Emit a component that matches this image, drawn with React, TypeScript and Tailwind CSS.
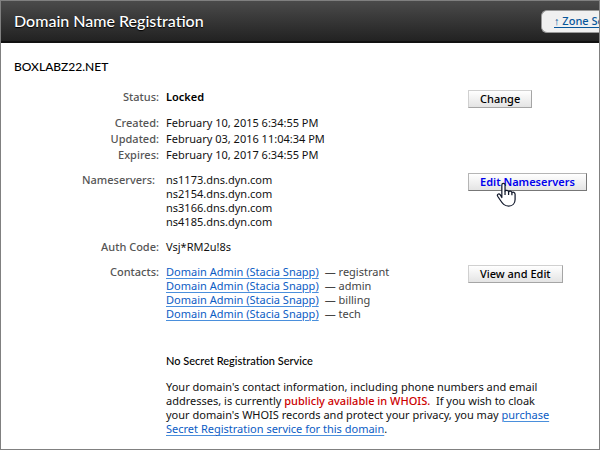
import type { ReactNode } from "react";

const nameservers = ["ns1173.dns.dyn.com", "ns2154.dns.dyn.com", "ns3166.dns.dyn.com", "ns4185.dns.dyn.com"];
const contacts = ["registrant", "admin", "billing", "tech"];
const dates = [
  ["Created:", "February 10, 2015 6:34:55 PM"],
  ["Updated:", "February 03, 2016 11:04:34 PM"],
  ["Expires:", "February 10, 2017 6:34:55 PM"],
];
const link = "text-[#0b5cc4] underline decoration-[#4a8fdc] decoration-1 underline-offset-2";

function Row({ label, note, action, children }: { label: string; note?: string; action?: ReactNode; children: ReactNode }) {
  return (
    <div className="flex">
      <dt className={`w-[158px] shrink-0 text-right font-medium text-[#555] ${note ?? ""}`}>{label}</dt>
      <dd className="ml-[7px] w-[302px] shrink-0 whitespace-nowrap">{children}</dd>
      {action && <dd className="shrink-0">{action}</dd>}
    </div>
  );
}

function ActionButton({ children, active = false }: { children: ReactNode; active?: boolean }) {
  return (
    <button
      type="button"
      className={`block h-[18px] border px-[11px] leading-4 whitespace-nowrap bg-linear-to-b from-white to-[#e4e4e4] ${
        active
          ? "border-[#b5b5b5] border-r-[#777] border-b-[#777] font-semibold text-[#0000ee]"
          : "border-[#d0d0d0] border-r-[#a5a5a5] border-b-[#a5a5a5] font-medium text-black"
      }`}
    >
      {children}
    </button>
  );
}

function HandCursor() {
  return (
    <svg className="pointer-events-none absolute top-2 left-[26px]" width="25" height="27" viewBox="0 0 20 22" aria-hidden="true">
      <path
        d="M6.2 13.5V3.3C6.2 1.4 8.8 1.4 8.8 3.3V8.2C9.2 7.3 11.6 7.3 11.7 8.8C12.2 8 14.2 8.1 14.4 9.5C15.2 8.8 17 9.2 17 10.8V15C17 18 15 20.4 11.8 20.4C8.2 20.4 6.8 18.5 4.7 15.3L2.8 12.4C2 11 3.7 9.9 4.9 11.2L6.2 13.5Z"
        fill="white"
        stroke="#11182b"
        strokeWidth="1"
        strokeLinejoin="round"
      />
      <path d="M8.8 8V11.4M11.7 8.8V11.4M14.4 9.5V11.6" stroke="#11182b" strokeWidth="1" fill="none" />
    </svg>
  );
}

export default function App() {
  return (
    <div className="min-h-screen overflow-hidden border border-[#808080] bg-white font-['Noto_Sans',sans-serif] text-[11px] leading-[14px] text-[#111]">
      <header className="flex h-[42px] items-center justify-between border-b-2 border-[#111] bg-linear-to-b from-[#4b4b4b] to-[#222] pl-[13px]">
        <h1 className="font-['Lato',sans-serif] text-base leading-5 font-medium text-white [text-shadow:0_1px_1px_#000]">Domain Name Registration</h1>
        <div className="h-[23px] w-[58px] shrink-0 overflow-hidden rounded-l-md border border-r-0 border-[#999] bg-[#f0f0f0] pl-3 leading-5 whitespace-nowrap">
          <a href="#zone" className="font-medium text-[#07569b] underline underline-offset-2">↑ Zone Se</a>
        </div>
      </header>
      <main className="pt-4">
        <h2 className="mb-[15px] pl-[13px] font-['Lato',sans-serif] text-xs leading-4 font-medium text-black">BOXLABZ22.NET</h2>
        <dl>
          <Row label="Status:" action={<ActionButton>Change</ActionButton>}>
            <span className="font-semibold text-black">Locked</span>
          </Row>
          <div className="mt-[7px] mb-[10px] leading-4">
            {dates.map(([label, value]) => (
              <Row key={label} label={label}>{value}</Row>
            ))}
          </div>
          <Row
            label="Nameservers:"
            note="pr-1"
            action={
              <div className="relative">
                <ActionButton active>Edit Nameservers</ActionButton>
                <HandCursor />
              </div>
            }
          >
            {nameservers.map((name) => (
              <div key={name}>{name}</div>
            ))}
          </Row>
          <div className="my-[11px]">
            <Row label="Auth Code:">Vsj*RM2u!8s</Row>
          </div>
          <Row label="Contacts:" action={<ActionButton>View and Edit</ActionButton>}>
            {contacts.map((role) => (
              <div key={role} className="flex gap-[6px]">
                <a href="#contact" className={link}>Domain Admin (Stacia Snapp)</a>
                <span className="text-[#444]">— {role}</span>
              </div>
            ))}
          </Row>
        </dl>
        <section className="mt-[33px] ml-[165px]">
          <h3 className="mb-3 font-['Lato',sans-serif] font-medium text-black">No Secret Registration Service</h3>
          <p>
            Your domain's contact information, including phone numbers and email
            <br />
            addresses, is currently <span className="font-medium text-[#cc0000]">publicly available in WHOIS.</span>&nbsp; If you wish to cloak
            <br />
            your domain's WHOIS records and protect your privacy, you may{" "}
            <a href="#purchase" className={link}>
              purchase
              <br />
              Secret Registration service for this domain
            </a>
            .
          </p>
        </section>
      </main>
    </div>
  );
}
